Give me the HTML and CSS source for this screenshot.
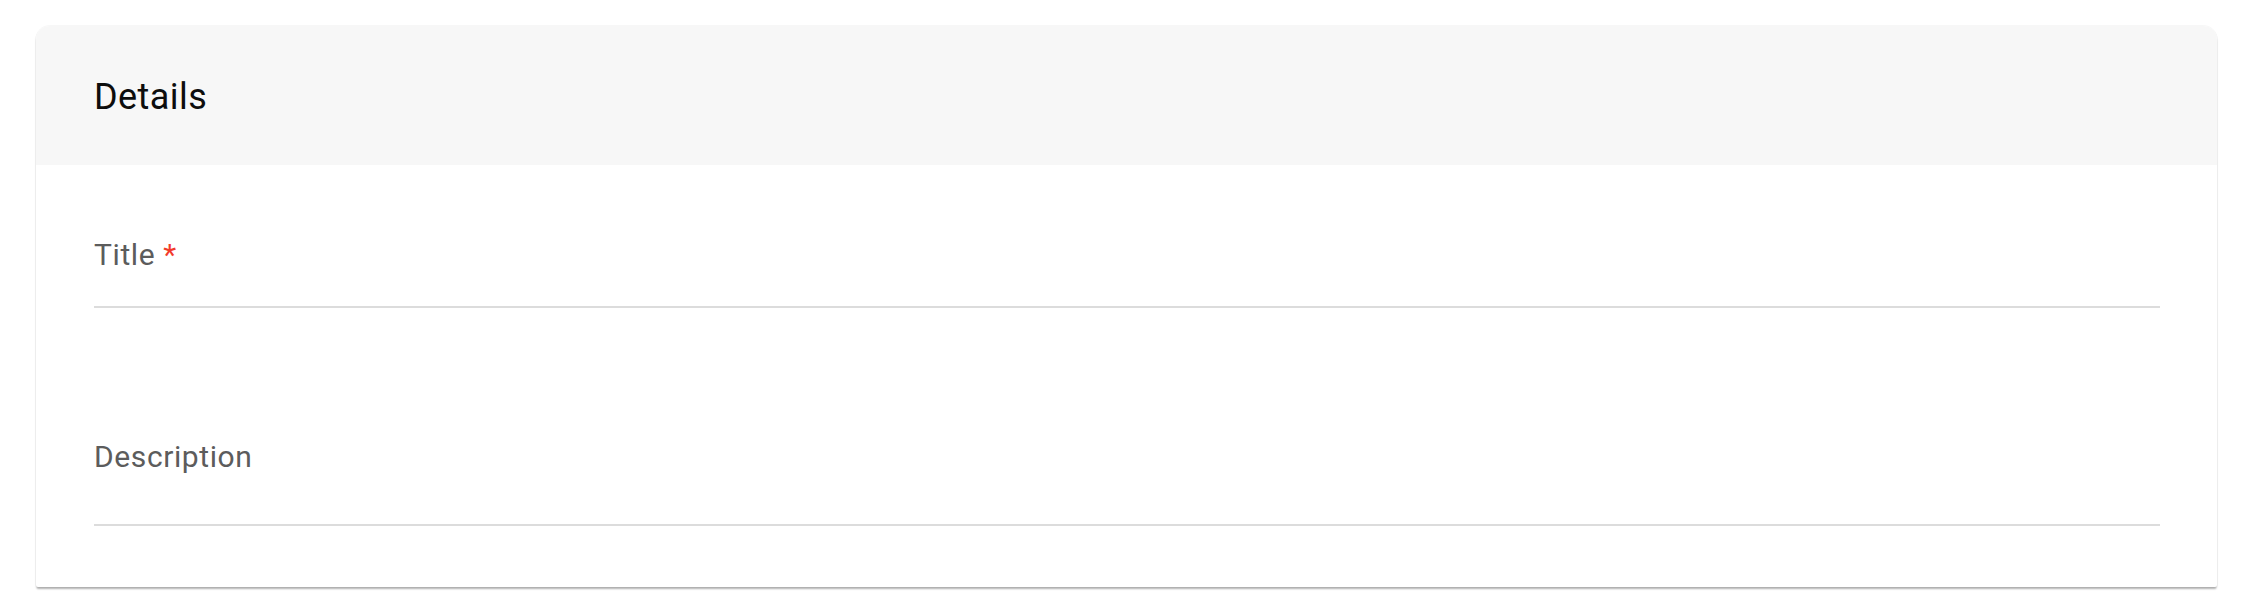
FILE: index.html
```html
<!DOCTYPE html>
<html lang="en">
<head>
<meta charset="utf-8">
<title>Details</title>
<link rel="stylesheet" href="styles.css">
</head>
<body>
  <section class="card">
    <header class="card-header">
      <h2 class="card-title">Details</h2>
    </header>
    <div class="card-body">
      <div class="field field-title">
        <label class="field-label">Title <span class="req">*</span></label>
      </div>
      <div class="field field-desc">
        <label class="field-label">Description</label>
      </div>
    </div>
  </section>
</body>
</html>
```

FILE: styles.css
```css
html, body {
  margin: 0;
  padding: 0;
  background: #ffffff;
}

body {
  font-family: Roboto, "Noto Sans", "Liberation Sans", sans-serif;
  padding: 26px 37px 29px 36px;
  min-height: 616px;
  box-sizing: border-box;
}

.card {
  background: #ffffff;
  border-radius: 14px 14px 2px 2px;
  box-shadow: 0 0 0 1px rgba(0, 0, 0, 0.03), 0 3px 2px -1px rgba(0, 0, 0, 0.2), 0 2px 2px rgba(0, 0, 0, 0.12);
  overflow: hidden;
}

.card-header {
  height: 139px;
  background: #f7f7f7;
  display: flex;
  align-items: center;
  padding: 0 58px;
}

.card-title {
  margin: 0;
  font-size: 36px;
  font-weight: 400;
  letter-spacing: 0.45px;
  color: #0d0d0d;
  line-height: 1;
  position: relative;
  top: 1px;
}

.card-body {
  padding: 67px 57px 61px 58px;
  display: flex;
  flex-direction: column;
}

.field {
  box-sizing: border-box;
  border-bottom: 2px solid #dcdcdc;
}

.field-title {
  height: 76px;
  padding-top: 1px;
}

.field-desc {
  height: 94px;
  margin-top: 124px;
  padding-top: 3px;
}

.field-label {
  display: block;
  font-size: 30px;
  line-height: 44px;
  letter-spacing: 0.6px;
  color: #5c5c5c;
}

.req {
  color: #f23a2b;
}
```
